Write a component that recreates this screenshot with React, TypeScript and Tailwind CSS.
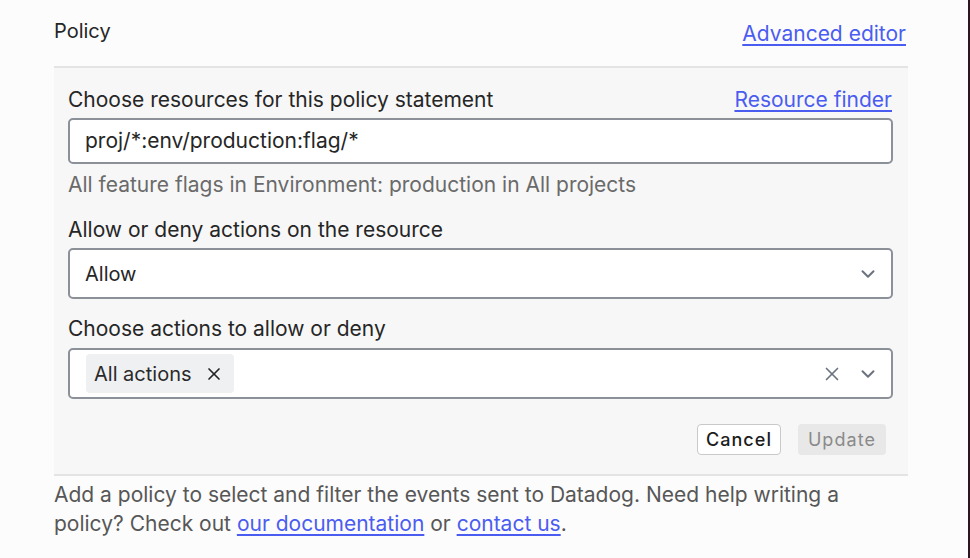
import { X, ChevronDown } from "lucide-react";

function Chevron() {
  return <ChevronDown className="w-[22px] h-[22px] text-[#6b7280]" strokeWidth={2.2} />;
}

export default function App() {
  return (
    <div className="w-[970px] h-[558px] bg-[#fcfcfc] border-r-2 border-[#2a1520] overflow-hidden font-['Inter',sans-serif] text-[21px] text-[#262626]">
      <div className="w-[854px] ml-[54px]">
        {/* Header */}
        <div className="flex justify-between items-end pt-[18px] h-[44px]">
          <span className="leading-[26px] text-[20px]">Policy</span>
          <a href="#" className="leading-[26px] text-[#4b5cf0] underline underline-offset-[3px] decoration-2 mr-[2px] -mb-[3px]">
            Advanced editor
          </a>
        </div>

        {/* Statement panel */}
        <div className="mt-[22px] bg-[#f7f7f7] border-t-2 border-b-2 border-[#e4e4e4] px-[14px] pt-[19px] pb-[19px]">
          <div className="flex justify-between items-center h-[26px]">
            <span>Choose resources for this policy statement</span>
            <a href="#" className="text-[#4b5cf0] underline underline-offset-[3px] decoration-2 mr-[2px]">
              Resource finder
            </a>
          </div>
          <div className="mt-[5px] h-[46px] w-[825px] bg-white border-2 border-[#8b9099] rounded-[5px] flex items-center px-[15px]">
            proj/*:env/production:flag/*
          </div>
          <div className="mt-[8px] leading-[26px] text-[#6a6a6a]">
            All feature flags in Environment: production in All projects
          </div>

          <div className="mt-[19px] leading-[26px]">Allow or deny actions on the resource</div>
          <div className="mt-[5px] h-[51px] w-[825px] bg-white border-2 border-[#8b9099] rounded-[5px] flex items-center justify-between pl-[15px] pr-[12px]">
            <span className="text-[20px]">Allow</span>
            <Chevron />
          </div>

          <div className="mt-[17px] leading-[26px]">Choose actions to allow or deny</div>
          <div className="mt-[6px] h-[51px] w-[825px] bg-white border-2 border-[#8b9099] rounded-[5px] flex items-center justify-between pl-[16px] pr-[12px]">
            <span className="h-[39px] bg-[#eff0f2] rounded-[4px] flex items-center gap-[12px] pl-[8px] pr-[10px] text-[20px] text-[#2a2a2a]">
              All actions
              <X className="w-[20px] h-[20px] text-[#222]" strokeWidth={2} />
            </span>
            <span className="flex items-center gap-[14px]">
              <X className="w-[22px] h-[22px] text-[#6b7280]" strokeWidth={1.8} />
              <Chevron />
            </span>
          </div>

          <div className="mt-[25px] flex justify-end gap-[17px] pr-[8px]">
            <button className="h-[31px] w-[84px] bg-white border border-[#c9c9c9] rounded-[4px] text-[18px] font-medium tracking-[0.06em] text-[#1c1c1c]">
              Cancel
            </button>
            <button className="h-[31px] w-[88px] bg-[#e8e8e8] rounded-[4px] text-[18px] tracking-[0.06em] text-[#8a8a8a]">
              Update
            </button>
          </div>
        </div>

        {/* Footer help text */}
        <div className="mt-[4px] leading-[29px] text-[#575757]">
          <div>Add a policy to select and filter the events sent to Datadog. Need help writing a</div>
          <div>
            policy? Check out{" "}
            <a href="#" className="text-[#4b5cf0] underline underline-offset-[3px] decoration-2">our documentation</a> or{" "}
            <a href="#" className="text-[#4b5cf0] underline underline-offset-[3px] decoration-2">contact us</a>.
          </div>
        </div>
      </div>
    </div>
  );
}
